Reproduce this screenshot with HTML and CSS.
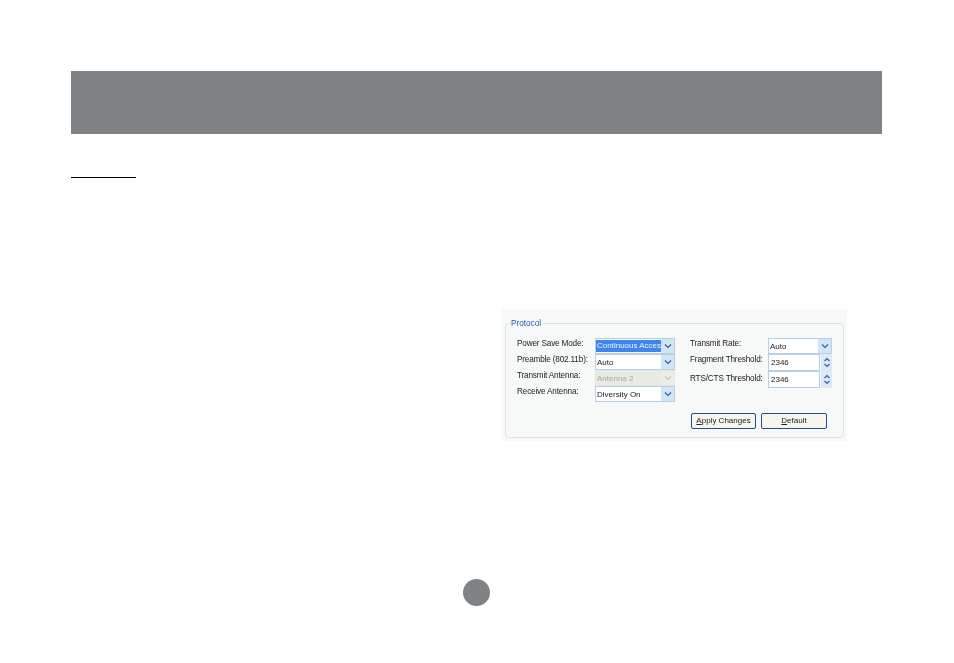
FILE: index.html
```html
<!DOCTYPE html>
<html lang="en">
<head>
<meta charset="utf-8">
<title>Protocol</title>
<link rel="stylesheet" href="styles.css">
</head>
<body>
<header class="banner"></header>
<div class="rule"></div>
<section class="shot">
  <fieldset class="group">
    <legend class="legend">Protocol</legend>
    <div class="columns">
      <div class="col col-left">
        <div class="row row-a"><span class="lab">Power Save Mode:</span>
          <span class="combo"><span class="val val-sel">Continuous Acces</span><span class="drop"><svg viewBox="0 0 8 6" width="8" height="6"><path d="M1 1.5 4 4.5 7 1.5" class="chev"/></svg></span></span></div>
        <div class="row row-b"><span class="lab">Preamble (802.11b):</span>
          <span class="combo"><span class="val">Auto</span><span class="drop"><svg viewBox="0 0 8 6" width="8" height="6"><path d="M1 1.5 4 4.5 7 1.5" class="chev"/></svg></span></span></div>
        <div class="row row-c"><span class="lab">Transmit Antenna:</span>
          <span class="combo combo-off"><span class="val">Antenna 2</span><span class="drop"><svg viewBox="0 0 8 6" width="8" height="6"><path d="M1 1.5 4 4.5 7 1.5" class="chev chev-off"/></svg></span></span></div>
        <div class="row row-d"><span class="lab">Receive Antenna:</span>
          <span class="combo"><span class="val">Diversity On</span><span class="drop"><svg viewBox="0 0 8 6" width="8" height="6"><path d="M1 1.5 4 4.5 7 1.5" class="chev"/></svg></span></span></div>
      </div>
      <div class="col col-right">
        <div class="row row-e"><span class="lab">Transmit Rate:</span>
          <span class="combo combo-r"><span class="val">Auto</span><span class="drop"><svg viewBox="0 0 8 6" width="8" height="6"><path d="M1 1.5 4 4.5 7 1.5" class="chev"/></svg></span></span></div>
        <div class="row row-f"><span class="lab">Fragment Threshold:</span>
          <span class="num"><span class="field">2346</span><span class="spin"><svg viewBox="0 0 8 5" width="8" height="5"><path d="M1.5 4 4 1.5 6.5 4" class="chev"/></svg><svg viewBox="0 0 8 5" width="8" height="5"><path d="M1.5 1 4 3.5 6.5 1" class="chev"/></svg></span></span></div>
        <div class="row row-g"><span class="lab">RTS/CTS Threshold:</span>
          <span class="num"><span class="field">2346</span><span class="spin"><svg viewBox="0 0 8 5" width="8" height="5"><path d="M1.5 4 4 1.5 6.5 4" class="chev"/></svg><svg viewBox="0 0 8 5" width="8" height="5"><path d="M1.5 1 4 3.5 6.5 1" class="chev"/></svg></span></span></div>
        <div class="actions">
          <button class="btn btn-apply" type="button"><u>A</u>pply Changes</button>
          <button class="btn btn-default" type="button"><u>D</u>efault</button>
        </div>
      </div>
    </div>
  </fieldset>
</section>
<div class="page-dot"></div>
</body>
</html>
```
FILE: styles.css
```css
html, body { margin: 0; padding: 0; background: #fff; }
body { width: 954px; height: 663px; overflow: hidden; padding-top: 71px; box-sizing: border-box; font-family: "Liberation Sans", Arial, sans-serif; }
.banner { height: 63px; width: 811px; margin-left: 71px; background: #808385; }
.rule { width: 65px; height: 1px; margin: 43px 0 0 71px; background: #000; }
.shot { width: 345px; height: 132px; margin: 131px 0 0 502px; padding: 9px 3px 0; box-sizing: border-box; background: #f7f9f9; filter: blur(0.45px); }
.group { margin: 0; padding: 0 0 0 11px; width: 339px; height: 120px; box-sizing: border-box; border: 1px solid #dce3e4; border-radius: 4px; min-inline-size: 0; }
.legend { padding: 0 2px 0 0; margin-left: -6px; font-size: 8.2px; line-height: 11px; color: #1f57bd; }
.columns { display: flex; }
.col { display: flex; flex-direction: column; }
.col-left { width: 173px; padding-top: 9px; }
.col-right { padding-top: 9px; }
.row { display: flex; align-items: flex-start; font-size: 8px; color: #222; }
.row-a, .row-b, .row-c, .row-d, .row-e { height: 16px; }
.row-f, .row-g { height: 17px; }
.lab { width: 78px; font-size: 8.2px; letter-spacing: -0.17px; line-height: 11px; flex: none; white-space: nowrap; }
.row-g .lab { padding-top: 2px; box-sizing: border-box; }
.combo { display: flex; width: 80px; height: 16px; box-sizing: border-box; border: 1px solid #b7cfe5; background: #fff; flex: none; }
.combo-r { width: 64px; }
.combo-off { background: #e9ebe2; border-color: #e3e6dc; }
.combo-off .val { color: #a7a99e; }
.val { flex: 1; min-width: 0; padding-left: 1px; line-height: 15px; white-space: nowrap; overflow: hidden; }
.val-sel { margin: 1px 0; line-height: 12px; background: #3f86ea; color: #e9f2ff; }
.drop { width: 13px; display: flex; align-items: center; justify-content: center; background: #d3e4f5; flex: none; }
.combo-off .drop { background: #eceee6; }
.chev { fill: none; stroke: #3560ae; stroke-width: 1.2; }
.chev-off { stroke: #c7c9bf; }
.num { display: flex; width: 64px; height: 17px; flex: none; }
.field { width: 52px; height: 17px; box-sizing: border-box; border: 1px solid #b7cfe5; background: #fff; padding-left: 2px; line-height: 15px; }
.spin { width: 11px; margin-left: 1px; display: flex; flex-direction: column; align-items: center; justify-content: center; gap: 1px; background: #dde9f5; }
.actions { display: flex; gap: 5px; margin-top: 25px; margin-left: 1px; }
.btn { height: 16px; width: 65px; margin: 0; padding: 0; box-sizing: border-box; border: 1px solid #1d4d8c; border-radius: 2px; background: #f6f6ef; font: 8px/14px "Liberation Sans", Arial, sans-serif; color: #222; }
.btn-default { width: 66px; }
.page-dot { width: 27px; height: 27px; border-radius: 50%; background: #808385; margin: 138px 0 0 463px; }
```
